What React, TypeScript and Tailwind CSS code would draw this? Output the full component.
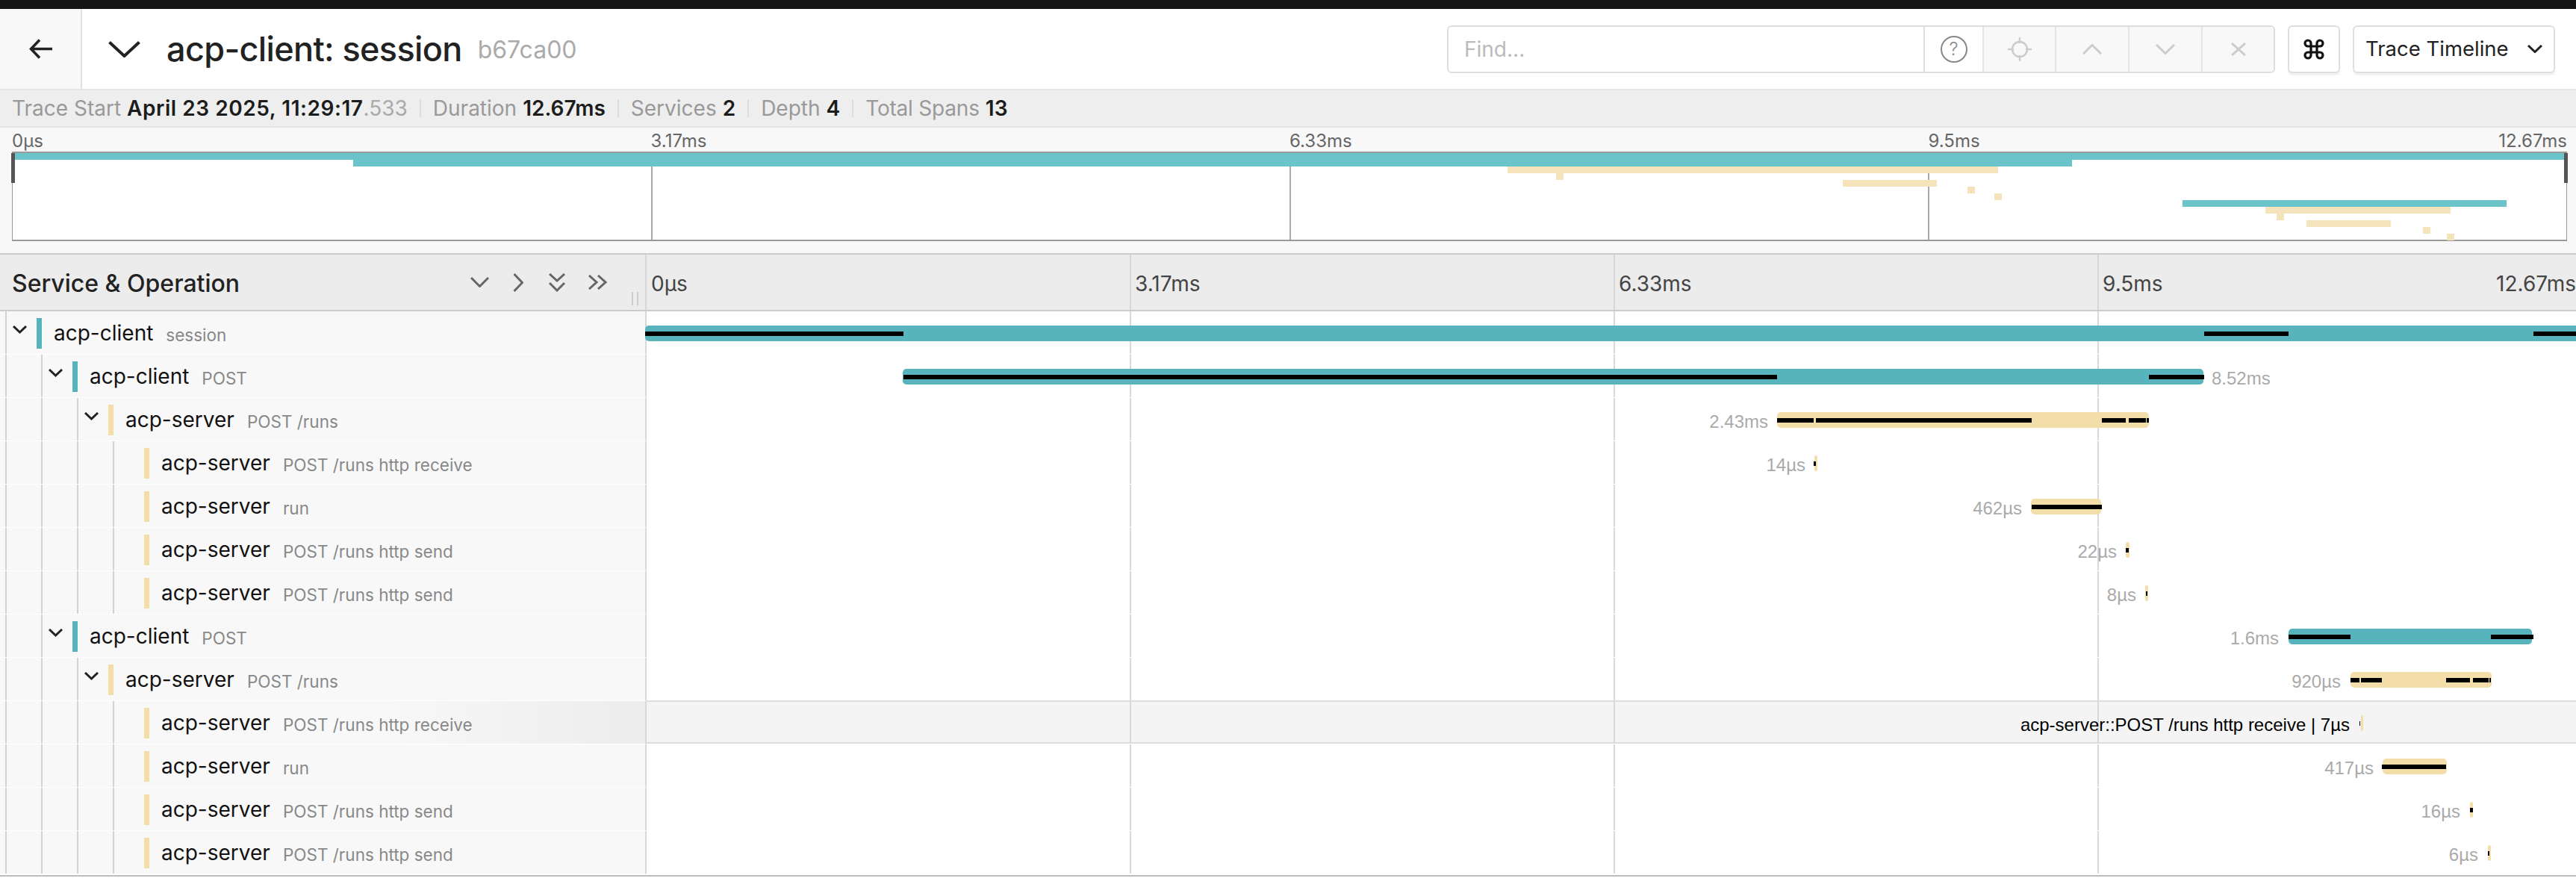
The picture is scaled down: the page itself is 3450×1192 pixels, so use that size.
import { Command } from "lucide-react";

type Span = {
  service: "client" | "server";
  name: string;
  op: string;
  depth: number;
  parent?: boolean;
  bar: [number, number];
  marks: [number, number][];
  label?: string;
  labelRight?: number;
  labelLeft?: number;
  hovered?: boolean;
};

// all x values are page pixels, the bar column starts at 866
const TIMELINE_X = 866;

const spans: Span[] = [
  { service: "client", name: "acp-client", op: "session", depth: 0, parent: true, bar: [864, 3470], marks: [[864, 1210], [2952, 3065], [3393, 3470]] },
  { service: "client", name: "acp-client", op: "POST", depth: 1, parent: true, bar: [1209, 2951], marks: [[1210, 2380], [2878, 2952]], label: "8.52ms", labelLeft: 2962 },
  { service: "server", name: "acp-server", op: "POST /runs", depth: 2, parent: true, bar: [2380, 2878], marks: [[2380, 2429], [2432, 2721], [2815, 2847], [2851, 2874], [2875, 2878]], label: "2.43ms", labelRight: 2368 },
  { service: "server", name: "acp-server", op: "POST /runs http receive", depth: 3, bar: [2430, 2434], marks: [[2429, 2432]], label: "14µs", labelRight: 2418 },
  { service: "server", name: "acp-server", op: "run", depth: 3, bar: [2720, 2814], marks: [[2721, 2815]], label: "462µs", labelRight: 2708 },
  { service: "server", name: "acp-server", op: "POST /runs http send", depth: 3, bar: [2847, 2852], marks: [[2847, 2851]], label: "22µs", labelRight: 2835 },
  { service: "server", name: "acp-server", op: "POST /runs http send", depth: 3, bar: [2873, 2877], marks: [[2874, 2876]], label: "8µs", labelRight: 2861 },
  { service: "client", name: "acp-client", op: "POST", depth: 1, parent: true, bar: [3065, 3391], marks: [[3065, 3148], [3336, 3393]], label: "1.6ms", labelRight: 3052 },
  { service: "server", name: "acp-server", op: "POST /runs", depth: 2, parent: true, bar: [3148, 3337], marks: [[3148, 3160], [3162, 3190], [3276, 3308], [3312, 3333], [3334, 3336]], label: "920µs", labelRight: 3135 },
  { service: "server", name: "acp-server", op: "POST /runs http receive", depth: 3, bar: [3162, 3165], marks: [[3160, 3161]], label: "acp-server::POST /runs http receive | 7µs", labelRight: 3147, hovered: true },
  { service: "server", name: "acp-server", op: "run", depth: 3, bar: [3191, 3277], marks: [[3190, 3276]], label: "417µs", labelRight: 3179 },
  { service: "server", name: "acp-server", op: "POST /runs http send", depth: 3, bar: [3308, 3312], marks: [[3308, 3312]], label: "16µs", labelRight: 3295 },
  { service: "server", name: "acp-server", op: "POST /runs http send", depth: 3, bar: [3332, 3336], marks: [[3332, 3334]], label: "6µs", labelRight: 3319 },
];

const minimapBars: { color: string; from: number; to: number }[] = [
  { color: "#6cc4cb", from: 16, to: 3437 },
  { color: "#6cc4cb", from: 473, to: 2775 },
  { color: "#f5e4bb", from: 2019, to: 2676 },
  { color: "#f5e4bb", from: 2084, to: 2094 },
  { color: "#f5e4bb", from: 2468, to: 2594 },
  { color: "#f5e4bb", from: 2635, to: 2645 },
  { color: "#f5e4bb", from: 2671, to: 2681 },
  { color: "#6cc4cb", from: 2923, to: 3357 },
  { color: "#f5e4bb", from: 3034, to: 3282 },
  { color: "#f5e4bb", from: 3049, to: 3059 },
  { color: "#f5e4bb", from: 3089, to: 3202 },
  { color: "#f5e4bb", from: 3245, to: 3255 },
  { color: "#f5e4bb", from: 3277, to: 3287 },
];

const Stroke = ({ w, h, d, color, width = 3 }: { w: number; h: number; d: string; color: string; width?: number }) => (
  <svg width={w} height={h} viewBox={`0 0 ${w} ${h}`} fill="none" stroke={color} strokeWidth={width} className="shrink-0">
    <path d={d} />
  </svg>
);

const Stat = ({ label, value, muted, last }: { label: string; value: string; muted?: string; last?: boolean }) => (
  <>
    <span className={`text-[#999] ${last ? "tracking-[-0.2px]" : ""}`}>{label}</span>
    <span className={`ml-[8px] font-semibold text-[#1c1c1c] ${muted ? "tracking-[0.55px]" : ""}`}>{value}</span>
    {muted && <span className="text-[#aaa]">{muted}</span>}
    {!last && <span className="mx-[16px] h-[24px] w-[2px] bg-[#dcdcdc]" />}
  </>
);

const TraceHeader = () => (
  <header className="flex h-[109px] border-b-2 border-[#e6e6e6] bg-white">
    <div className="flex w-[110px] items-center justify-center border-r-2 border-[#e2e2e2] bg-[#f8f8f8] pb-[1px]">
      <Stroke w={31} h={27} d="M2 13.5H31M14 1.5L2.5 13.5L14 25.5" color="#222" width={3.5} />
    </div>
    <div className="flex flex-1 items-center">
      <div className="ml-[35px] mr-[35px]">
        <Stroke w={43} h={22} d="M1.5 1.5L21.5 20L41.5 1.5" color="#222" width={4} />
      </div>
      <h1 className="text-[45px] leading-none font-medium tracking-[-0.65px] text-[#222]">acp-client: session</h1>
      <span className="ml-[21px] mt-[3px] text-[32px] leading-none text-[#aaa]">b67ca00</span>
      <div className="ml-auto mr-[28px] flex items-center">
        <div className="flex h-[64px] w-[1109px] rounded-[6px] border-2 border-[#dedede]">
          <div className="flex w-[636px] items-center pl-[21px] text-[28px] text-[#bbb]">Find...</div>
          <div className="flex w-[79px] items-center justify-center border-l-2 border-[#dedede]">
            <span className="flex h-[36px] w-[36px] items-center justify-center rounded-full border-2 border-[#888] text-[24px] leading-none font-light text-[#888]">?</span>
          </div>
          <div className="flex w-[97px] items-center justify-center border-l-2 border-[#e4e4e4] bg-[#f8f8f8]">
            <svg width="32" height="32" viewBox="0 0 32 32" fill="none" stroke="#ccc" strokeWidth="2.5">
              <circle cx="16" cy="16" r="10" />
              <path d="M16 0V8M16 24V32M0 16H8M24 16H32" />
            </svg>
          </div>
          <div className="flex w-[98px] items-center justify-center border-l-2 border-[#e4e4e4] bg-[#f8f8f8]">
            <Stroke w={26} h={14} d="M1 13L13 1.5L25 13" color="#ccc" />
          </div>
          <div className="flex w-[98px] items-center justify-center border-l-2 border-[#e4e4e4] bg-[#f8f8f8]">
            <Stroke w={26} h={14} d="M1 1L13 12.5L25 1" color="#ccc" />
          </div>
          <div className="flex flex-1 items-center justify-center rounded-r-[6px] border-l-2 border-[#e4e4e4] bg-[#f8f8f8]">
            <Stroke w={20} h={18} d="M1 1L19 17M19 1L1 17" color="#ccc" />
          </div>
        </div>
        <div className="ml-[17px] flex h-[64px] w-[70px] items-center justify-center rounded-[6px] border-2 border-[#dedede] shadow-[0_3px_0_#f2f2f2]">
          <Command size={32} strokeWidth={2.4} color="#111" />
        </div>
        <div className="ml-[17px] flex h-[64px] w-[271px] items-center rounded-[6px] border-2 border-[#dedede] pl-[15px] text-[27.5px] text-[#222] shadow-[0_3px_0_#f2f2f2]">
          Trace Timeline
          <span className="ml-[25px]">
            <Stroke w={20} h={11} d="M1 1L10 9.5L19 1" color="#222" />
          </span>
        </div>
      </div>
    </div>
  </header>
);

const TraceStats = () => (
  <div className="flex h-[50px] items-center border-b-2 border-[#e4e4e4] bg-[#eee] pl-[16px] text-[28px]">
    <Stat label="Trace Start" value="April 23 2025, 11:29:17" muted=".533" />
    <Stat label="Duration" value="12.67ms" />
    <Stat label="Services" value="2" />
    <Stat label="Depth" value="4" />
    <Stat label="Total Spans" value="13" last />
  </div>
);

const Minimap = () => (
  <div className="h-[170px] border-b-2 border-[#ccc] bg-[#f8f8f8] pl-[16px] pr-[12px]">
    <div className="grid h-[32px] grid-cols-4 items-center text-[24px] text-[#666]">
      <span>0µs</span>
      <span>3.17ms</span>
      <span>6.33ms</span>
      <span className="flex justify-between">
        <span>9.5ms</span>
        <span>12.67ms</span>
      </span>
    </div>
    <div className="relative h-[120px] border-x border-y-2 border-[#999] bg-white">
      <div className="absolute inset-0 grid grid-cols-4">
        <div />
        <div className="border-l-2 border-[#aaa]" />
        <div className="border-l-2 border-[#aaa]" />
        <div className="border-l-2 border-[#aaa]" />
      </div>
      {minimapBars.map((b, i) => (
        <div
          key={i}
          className="absolute h-[9px]"
          style={{ top: i * 9, left: b.from - 17, width: b.to - b.from, backgroundColor: b.color }}
        />
      ))}
      <div className="absolute -left-[2px] top-0 h-[40px] w-[5px] bg-[#555]" />
      <div className="absolute -right-[2px] top-0 h-[40px] w-[5px] bg-[#555]" />
    </div>
  </div>
);

const ColumnHeader = () => (
  <div className="flex h-[76px] border-b-2 border-[#ccc] bg-[#ececec]">
    <div className="relative flex w-[866px] shrink-0 items-center border-r-2 border-[#d8d8d8] pl-[16px] text-[32px] font-medium text-[#222]">
      <span className="mt-[3px]">Service &amp; Operation</span>
      <div className="ml-auto mr-[51px] flex items-center text-[#666]">
        <Stroke w={25} h={14} d="M1 1L12.5 12.5L24 1" color="#666" />
        <span className="ml-[32px]">
          <Stroke w={14} h={25} d="M1.5 1L12.5 12.5L1.5 24" color="#666" />
        </span>
        <span className="ml-[34px]">
          <Stroke w={22} h={25} d="M1 1L11 10L21 1M1 13L11 23L21 13" color="#666" />
        </span>
        <span className="ml-[31px]">
          <Stroke w={25} h={20} d="M1 1L11 10L1 19M13 1L23 10L13 19" color="#666" />
        </span>
      </div>
      <div className="absolute right-[9px] top-[50px] h-[18px] w-[9px] border-x-2 border-[#ccc]" />
    </div>
    <div className="grid w-[2592px] shrink-0 -ml-[1px] grid-cols-4 text-[28px] text-[#444]">
      <span className="flex items-center pl-[7px] pt-[3px]">0µs</span>
      <span className="flex items-center border-l-2 border-[#d8d8d8] pl-[5px] pt-[3px]">3.17ms</span>
      <span className="flex items-center border-l-2 border-[#d8d8d8] pl-[5px] pt-[3px]">6.33ms</span>
      <span className="flex items-center border-l-2 border-[#d8d8d8] pl-[5px] pt-[3px]">9.5ms</span>
    </div>
    <span className="absolute right-0 flex h-[74px] items-center pt-[3px] text-[28px] text-[#444]">12.67ms</span>
  </div>
);

const SpanName = ({ span }: { span: Span }) => (
  <div
    className={`flex h-[58px] w-[866px] shrink-0 border-r-2 border-b border-r-[#d8d8d8] border-b-white pl-[7px] ${
      span.hovered ? "bg-linear-to-r from-[#f8f8f8] from-[60%] to-[#ececec]" : "bg-[#f8f8f8]"
    }`}
  >
    {Array.from({ length: span.depth }).map((_, i) => (
      <div key={i} className="w-[48px] shrink-0 border-l-2 border-[#d2d2d2]" />
    ))}
    <div className="w-[42px] shrink-0 border-l-2 border-[#d2d2d2] pl-[8px] pt-[19px]">
      {span.parent && <Stroke w={19} h={11} d="M1 1L9.5 9L18 1" color="#222" />}
    </div>
    <div className={`mt-[9px] h-[41px] w-[7px] shrink-0 ${span.service === "client" ? "bg-[#57b4bc]" : "bg-[#f3dda8]"}`} />
    <div className="ml-[16px] flex h-[57px] items-center whitespace-nowrap pt-[1px]">
      <span className="text-[28px] text-[#111]">{span.name}</span>
      <span className="ml-[17px] mt-[5px] text-[22.5px] text-[#888]">{span.op}</span>
    </div>
  </div>
);

const SpanBar = ({ span }: { span: Span }) => (
  <div className="relative h-[58px] flex-1">
    {span.hovered && <div className="absolute inset-x-0 -top-px bottom-px border-y-2 border-[#ddd] bg-[#f4f4f4]" />}
    <div className="absolute -left-px top-0 grid h-[57px] w-[2592px] grid-cols-4">
      <div />
      <div className="border-l-2 border-[#d8d8d8]" />
      <div className="border-l-2 border-[#d8d8d8]" />
      <div className="border-l-2 border-[#d8d8d8]" />
    </div>
    <div
      className={`absolute top-[19px] h-[21px] rounded-[5px] ${span.service === "client" ? "bg-[#57b4bc]" : "bg-[#f3dda8]"}`}
      style={{ left: span.bar[0] - TIMELINE_X, width: span.bar[1] - span.bar[0] }}
    />
    {span.marks.map(([from, to]) => (
      <div
        key={from}
        className="absolute top-[27px] h-[6px] bg-black"
        style={{ left: from - TIMELINE_X, width: to - from }}
      />
    ))}
    {span.label && (
      <span
        className={`absolute top-[20px] whitespace-nowrap text-[24px] leading-[24px] [font-family:'Liberation_Sans',sans-serif] ${
          span.hovered ? "text-black" : "text-[#aaa]"
        }`}
        style={
          span.labelLeft
            ? { left: span.labelLeft - TIMELINE_X }
            : { right: 3450 - (span.labelRight as number) }
        }
      >
        {span.label}
      </span>
    )}
  </div>
);

export default function App() {
  return (
    <div className="relative h-[1192px] w-[3450px] overflow-hidden bg-white [font-family:Inter,sans-serif]">
      <div className="h-[12px] bg-[#151515]" />
      <TraceHeader />
      <TraceStats />
      <Minimap />
      <div className="relative">
        <ColumnHeader />
        {spans.map((span, i) => (
          <div key={i} className="flex">
            <SpanName span={span} />
            <SpanBar span={span} />
          </div>
        ))}
      </div>
      <div className="mt-px h-[2px] bg-[#bbb]" />
    </div>
  );
}
